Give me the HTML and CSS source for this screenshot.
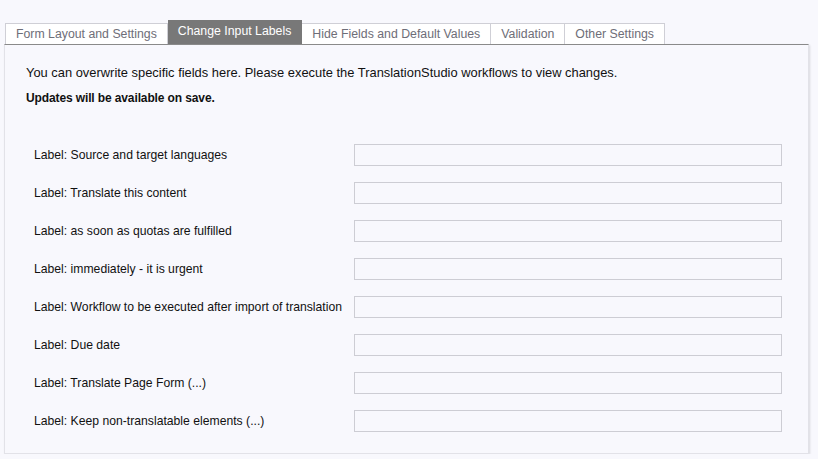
FILE: index.html
```html
<!DOCTYPE html>
<html lang="en">

<head>
    <meta charset="UTF-8">
    <title>Change Input Labels</title>
    <link rel="stylesheet" href="styles.css">
</head>

<body>
    <div class="tabs">
        <div class="tab">Form Layout and Settings</div>
        <div class="tab active">Change Input Labels</div>
        <div class="tab">Hide Fields and Default Values</div>
        <div class="tab">Validation</div>
        <div class="tab">Other Settings</div>
    </div>
    <div class="panel">
        <p class="intro">You can overwrite specific fields here. Please execute the TranslationStudio workflows to view changes.</p>
        <p class="intro bold">Updates will be available on save.</p>
        <div class="labelRows">
            <div class="labelRow">
                <label>Label: Source and target languages</label>
                <input type="text">
            </div>
            <div class="labelRow">
                <label>Label: Translate this content</label>
                <input type="text">
            </div>
            <div class="labelRow">
                <label>Label: as soon as quotas are fulfilled</label>
                <input type="text">
            </div>
            <div class="labelRow">
                <label>Label: immediately - it is urgent</label>
                <input type="text">
            </div>
            <div class="labelRow">
                <label>Label: Workflow to be executed after import of translation</label>
                <input type="text">
            </div>
            <div class="labelRow">
                <label>Label: Due date</label>
                <input type="text">
            </div>
            <div class="labelRow">
                <label>Label: Translate Page Form (...)</label>
                <input type="text">
            </div>
            <div class="labelRow">
                <label>Label: Keep non-translatable elements (...)</label>
                <input type="text">
            </div>
        </div>
    </div>
</body>

</html>
```

FILE: styles.css
```css
:root {
    --pageBg: #f8f8fd;
    --tabBorder: #cfcfd6;
    --tabText: #6e6e78;
    --activeTab: #787878;
    --inputBorder: #cdcdd4;
}

body {
    margin: 0;
    padding-top: 21px;
    background: var(--pageBg);
    font-family: "Liberation Sans", Arial, sans-serif;
    font-size: 12px;
    color: #111;
}

.tabs {
    display: flex;
    align-items: flex-end;
    margin-left: 5px;
    height: 23px;
}

.tab {
    height: 20px;
    line-height: 20px;
    padding: 0 10px;
    background: #fff;
    border: 1px solid var(--tabBorder);
    border-bottom: none;
    border-left: none;
    color: var(--tabText);
    font-size: 12.3px;
}

.tab:first-child {
    border-left: 1px solid var(--tabBorder);
}

.tab.active {
    height: 23px;
    line-height: 21px;
    background: var(--activeTab);
    border-color: var(--activeTab);
    color: #fff;
}

.panel {
    box-sizing: border-box;
    margin: 0 9px 0 4px;
    height: 410px;
    border: 1px solid #e2e2e8;
    border-top: 1px solid #8a8a8a;
    box-shadow: 1px 1px 2px rgba(0, 0, 0, 0.12);
    padding: 21px 0 0 21px;
}

.intro {
    margin: 0 0 13px;
    line-height: 13px;
    font-size: 12.9px;
}

.intro.bold {
    font-size: 12px;
    font-weight: bold;
    letter-spacing: -0.12px;
}

.labelRows {
    display: flex;
    flex-direction: column;
    gap: 16px;
    margin-top: 39px;
    padding-left: 8px;
}

.labelRow {
    display: flex;
    align-items: center;
    height: 22px;
    font-size: 12.2px;
}

.labelRow label {
    width: 320px;
}

.labelRow input {
    width: 428px;
    height: 22px;
    box-sizing: border-box;
    margin: 0;
    border: 1px solid var(--inputBorder);
    background: var(--pageBg);
}
```
